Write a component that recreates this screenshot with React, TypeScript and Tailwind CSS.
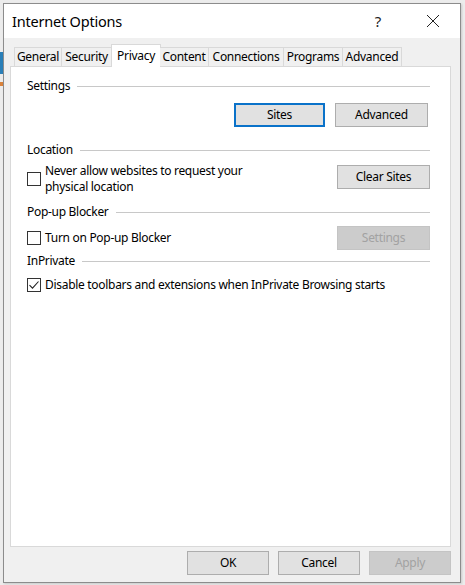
import React from 'react';

const tabs = [
  { label: 'General', w: 48 },
  { label: 'Security', w: 50 },
  { label: 'Privacy', w: 50, active: true },
  { label: 'Content', w: 49 },
  { label: 'Connections', w: 75 },
  { label: 'Programs', w: 59 },
  { label: 'Advanced', w: 59 },
];

const SectionHeader = ({ title, className = '' }: { title: string; className?: string }) => (
  <div className={`flex items-center h-[16px] ${className}`}>
    <span className="leading-[16px]">{title}</span>
    <div className="flex-1 h-px bg-[#c8c8c8] ml-[7px]" />
  </div>
);

const Checkbox = ({ checked = false }: { checked?: boolean }) => (
  <div className="w-[14px] h-[14px] border border-[#333333] bg-white flex items-center justify-center shrink-0">
    {checked && (
      <svg width="12" height="12" viewBox="0 0 12 12">
        <path d="M1.5 6.2 L4.5 9.2 L10.5 2.5" fill="none" stroke="#222" strokeWidth="1.1" />
      </svg>
    )}
  </div>
);

const Button = ({
  label,
  w,
  focused = false,
  disabled = false,
}: {
  label: string;
  w: number;
  focused?: boolean;
  disabled?: boolean;
}) => (
  <button
    style={{ width: w }}
    className={
      'h-[24px] flex items-center justify-center leading-none ' +
      (disabled
        ? 'bg-[#cccccc] border border-[#c4c4c4] text-[#a2a2a2]'
        : focused
          ? 'bg-[#e1e1e1] border-2 border-[#0a72c9] text-black'
          : 'bg-[#e1e1e1] border border-[#adadad] text-black')
    }
  >
    {label}
  </button>
);

export default function App() {
  return (
    <div
      className="w-[465px] h-[585px] bg-[#ececec] relative overflow-hidden text-[12px] tracking-[-0.3px] text-black"
      style={{ fontFamily: '"Noto Sans", "Open Sans", sans-serif' }}
    >
      {/* desktop peeking at the left edge */}
      <div className="absolute left-0 top-[52px] w-[3px] h-[22px] bg-[#2a7fb8]" />
      <div className="absolute left-0 top-[82px] w-[3px] h-[4px] bg-[#d9823b]" />

      <div className="absolute left-[3px] top-[3px] w-[458px] h-[580px] border border-[#8c8c8c] bg-[#f0f0f0] flex flex-col shadow-[1px_1px_2px_rgba(0,0,0,0.15)]">
        {/* title bar */}
        <div className="h-[34px] bg-white flex items-center shrink-0">
          <span className="ml-[8px] text-[14.5px] tracking-[-0.2px] leading-none">Internet Options</span>
          <span className="ml-auto mr-[45px] text-[15px] leading-none text-[#222]">?</span>
          <svg className="mr-[20px]" width="14" height="14" viewBox="0 0 14 14">
            <path d="M1 1 L13 13 M13 1 L1 13" stroke="#222" strokeWidth="1" />
          </svg>
        </div>

        <div className="flex-1 flex flex-col pl-[6px] pr-[9px] pt-[6px] pb-[8px]">
          {/* tabs */}
          <div className="flex items-end h-[23px] pl-[4px] relative z-10 -mb-px">
            {tabs.map((t) =>
              t.active ? (
                <div
                  key={t.label}
                  style={{ width: t.w }}
                  className="h-[23px] bg-white border border-b-0 border-[#d9d9d9] flex items-start justify-center pt-[2px] -mx-px"
                >
                  {t.label}
                </div>
              ) : (
                <div
                  key={t.label}
                  style={{ width: t.w }}
                  className="h-[20px] bg-[#f0f0f0] border border-[#d9d9d9] border-l-0 first:border-l flex items-center justify-center"
                >
                  {t.label}
                </div>
              )
            )}
          </div>

          {/* panel */}
          <div className="h-[481px] bg-white border border-[#d9d9d9] pl-[16px] pr-[20px] pt-[11px]">
            <SectionHeader title="Settings" />
            <div className="flex justify-end gap-[10px] mt-[9px] pr-[2px]">
              <Button label="Sites" w={91} focused />
              <Button label="Advanced" w={93} />
            </div>

            <SectionHeader title="Location" className="mt-[15px]" />
            <div className="flex items-start mt-[5px]">
              <div className="pt-[9px]">
                <Checkbox />
              </div>
              <div className="ml-[4px] flex flex-col">
                <span className="h-[16px] leading-[16px]">Never allow websites to request your</span>
                <span className="h-[16px] leading-[16px]">physical location</span>
              </div>
              <div className="ml-auto pt-[2px]">
                <Button label="Clear Sites" w={93} />
              </div>
            </div>

            <SectionHeader title="Pop-up Blocker" className="mt-[9px]" />
            <div className="flex items-center mt-[6px]">
              <Checkbox />
              <span className="ml-[4px]">Turn on Pop-up Blocker</span>
              <div className="ml-auto">
                <Button label="Settings" w={93} disabled />
              </div>
            </div>

            <SectionHeader title="InPrivate" className="mt-[3px]" />
            <div className="flex items-center mt-[8px] h-[16px]">
              <Checkbox checked />
              <span className="ml-[4px]">Disable toolbars and extensions when InPrivate Browsing starts</span>
            </div>
          </div>

          {/* footer buttons */}
          <div className="flex justify-end gap-[9px] mt-[4px]">
            <Button label="OK" w={82} />
            <Button label="Cancel" w={82} />
            <Button label="Apply" w={82} disabled />
          </div>
        </div>
      </div>
    </div>
  );
}
